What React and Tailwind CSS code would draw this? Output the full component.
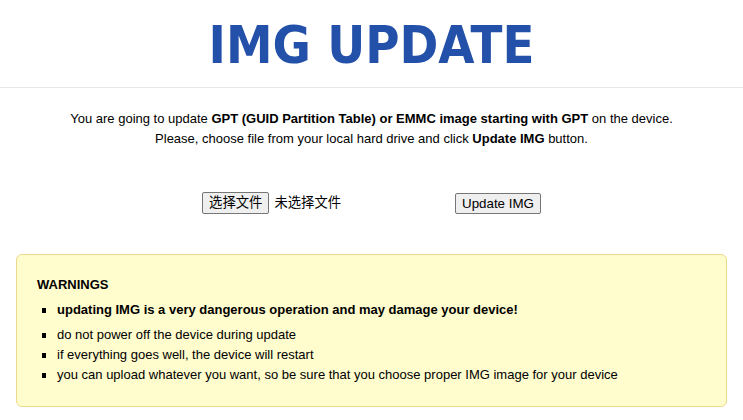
import React from "react";

const body = { fontFamily: '"Liberation Sans", Arial, sans-serif' };

export default function App() {
  return (
    <div className="min-h-[420px] bg-white text-black" style={body}>
      <header className="h-[88px] border-b border-[#e6e6e6] flex items-center justify-center">
        <h1
          className="text-[52px] leading-none font-bold text-[#2350a8] pt-[2px]"
          style={{ fontFamily: '"DejaVu Sans Condensed", "DejaVu Sans", sans-serif' }}
        >
          IMG UPDATE
        </h1>
      </header>

      <div className="pt-[21px] text-center text-[13px] leading-[20px]">
        <p>
          You are going to update <b>GPT (GUID Partition Table) or EMMC image starting with GPT</b> on the device.
        </p>
        <p>
          Please, choose file from your local hard drive and click <b>Update IMG</b> button.
        </p>
      </div>

      <div className="mt-[43px] flex justify-center items-center gap-[114px] text-[13.33px]">
        <div className="flex items-center gap-[5px]">
          <button
            className="h-[22px] px-[6px] border border-[#767676] rounded-[2px] bg-[#efefef]"
            style={{ fontFamily: '"Liberation Sans", "Noto Sans CJK SC", sans-serif' }}
          >
            选择文件
          </button>
          <span style={{ fontFamily: '"Liberation Sans", "Noto Sans CJK SC", sans-serif' }}>未选择文件</span>
        </div>
        <button className="h-[21px] px-[6px] border border-[#767676] rounded-[2px] bg-[#efefef]">
          Update IMG
        </button>
      </div>

      <div className="mx-4 mt-[40px] rounded-[6px] border border-[#ecd98a] bg-[#fffccd] px-5 pt-[20px] pb-[21px] text-[13px] leading-[20px]">
        <div className="font-bold">WARNINGS</div>
        <ul className="mt-[5px]">
          <li className="flex items-center font-bold mb-[5px]">
            <span className="w-[4px] h-[5px] bg-black ml-[5px] mr-[11px]" />
            updating IMG is a very dangerous operation and may damage your device!
          </li>
          {[
            "do not power off the device during update",
            "if everything goes well, the device will restart",
            "you can upload whatever you want, so be sure that you choose proper IMG image for your device",
          ].map((t) => (
            <li key={t} className="flex items-center">
              <span className="w-[4px] h-[5px] bg-black ml-[5px] mr-[11px]" />
              {t}
            </li>
          ))}
        </ul>
      </div>
    </div>
  );
}
